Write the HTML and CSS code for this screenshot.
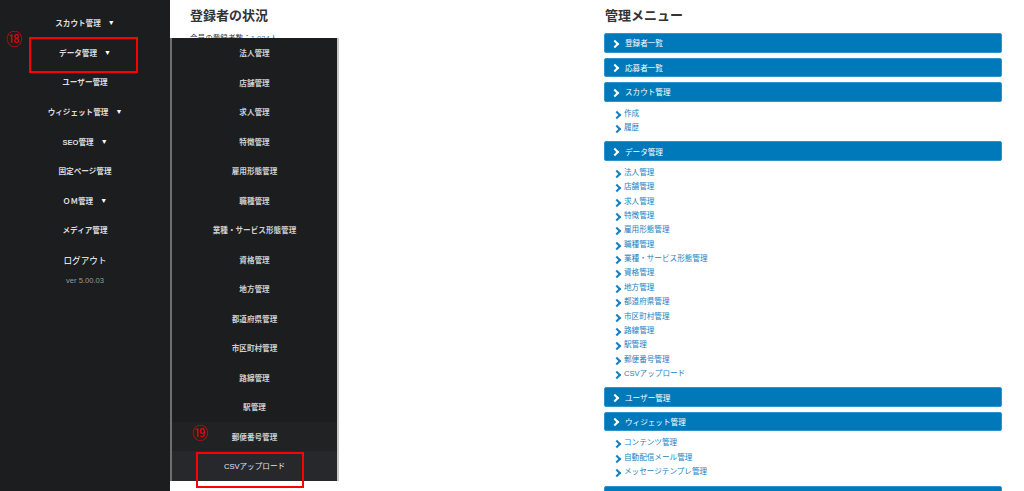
FILE: index.html
```html
<!DOCTYPE html>
<html lang="ja">
<head>
<meta charset="UTF-8">
<title>管理画面</title>
<link rel="stylesheet" href="styles.css">
</head>
<body>
<div class="wrap">
  <aside class="side">
    <ul class="side-nav">
      <li>スカウト管理<span class="tri">▼</span></li>
      <li>データ管理<span class="tri">▼</span></li>
      <li>ユーザー管理</li>
      <li>ウィジェット管理<span class="tri">▼</span></li>
      <li>SEO管理<span class="tri">▼</span></li>
      <li>固定ページ管理</li>
      <li>ＯＭ管理<span class="tri">▼</span></li>
      <li>メディア管理</li>
      <li class="logout">ログアウト</li>
    </ul>
    <p class="ver">ver 5.00.03</p>

    <ul class="sub-menu">
      <li>法人管理</li>
      <li>店舗管理</li>
      <li>求人管理</li>
      <li>特徴管理</li>
      <li>雇用形態管理</li>
      <li>職種管理</li>
      <li>業種・サービス形態管理</li>
      <li>資格管理</li>
      <li>地方管理</li>
      <li>都道府県管理</li>
      <li>市区町村管理</li>
      <li>路線管理</li>
      <li>駅管理</li>
      <li class="hover1">郵便番号管理</li>
      <li class="hover2">CSVアップロード</li>
    </ul>

    <span class="note note18">⑱</span>
    <span class="mark mark18"></span>
    <span class="note note19">⑲</span>
    <span class="mark mark19"></span>
  </aside>

  <main class="main">
    <section class="status">
      <h2>登録者の状況</h2>
      <p class="count">会員の登録者数：<a href="#">1,024人</a></p>
    </section>

    <section class="menu">
      <h2>管理メニュー</h2>
      <div class="bar">登録者一覧</div>
      <div class="bar">応募者一覧</div>
      <div class="bar">スカウト管理</div>
      <ul class="links">
        <li>作成</li>
        <li>履歴</li>
      </ul>
      <div class="bar">データ管理</div>
      <ul class="links">
        <li>法人管理</li>
        <li>店舗管理</li>
        <li>求人管理</li>
        <li>特徴管理</li>
        <li>雇用形態管理</li>
        <li>職種管理</li>
        <li>業種・サービス形態管理</li>
        <li>資格管理</li>
        <li>地方管理</li>
        <li>都道府県管理</li>
        <li>市区町村管理</li>
        <li>路線管理</li>
        <li>駅管理</li>
        <li>郵便番号管理</li>
        <li>CSVアップロード</li>
      </ul>
      <div class="bar">ユーザー管理</div>
      <div class="bar">ウィジェット管理</div>
      <ul class="links">
        <li>コンテンツ管理</li>
        <li>自動配信メール管理</li>
        <li>メッセージテンプレ管理</li>
      </ul>
      <div class="bar bar-last"></div>
    </section>
  </main>
</div>
</body>
</html>
```

FILE: styles.css
```css
*{
    padding:0;
    margin:0;
    box-sizing:border-box;
}
ul,li{
    list-style:none;
}
body{
    font-family:"Liberation Sans","Noto Sans CJK JP",sans-serif;
    background:#fff;
    color:#333;
    overflow:hidden;
}
.wrap{
    display:flex;
    height:491px;
}

/* sidebar */
.side{
    width:170px;
    flex-shrink:0;
    background:#1c1d1f;
    padding-top:8px;
    position:relative;
}
.side-nav li{
    height:29.6px;
    display:flex;
    align-items:center;
    justify-content:center;
    font-size:7.6px;
    font-weight:bold;
    color:#dcdcdc;
}
.side-nav .tri{
    font-size:7px;
    margin-left:7px;
    color:#fff;
}
.side-nav .logout{
    font-size:8.6px;
    font-weight:normal;
    color:#fff;
}
.ver{
    text-align:center;
    font-size:7.6px;
    color:#9a9a9a;
    margin-top:2px;
}

/* flyout of data menu */
.sub-menu{
    position:absolute;
    top:38px;
    left:170px;
    width:169px;
    height:443px;
    background:#1c1d1f;
    border-left:2px solid #6e6f71;
    border-right:2px solid #c9c9c9;
    z-index:5;
}
.sub-menu li{
    height:29.53px;
    display:flex;
    align-items:center;
    justify-content:center;
    font-size:7.6px;
    font-weight:bold;
    color:#cfcfcf;
}
.sub-menu .hover1{
    background:#202224;
}
.sub-menu .hover2{
    background:#26282b;
    font-weight:normal;
    color:#e6e6e6;
}

/* red annotations */
.note{
    position:absolute;
    color:#e00;
    font-size:16px;
    line-height:16px;
    z-index:10;
}
.note18{
    left:6px;
    top:32px;
}
.note19{
    left:192px;
    top:426px;
}
.mark{
    position:absolute;
    border:2px solid #f00;
    z-index:10;
}
.mark18{
    left:29px;
    top:37px;
    width:109px;
    height:36px;
}
.mark19{
    left:196px;
    top:452px;
    width:108px;
    height:36px;
}

/* main */
.main{
    flex:1;
    display:grid;
    grid-template-columns:1fr 1fr;
    column-gap:16px;
    padding:7px 22px 0 20px;
    align-items:start;
}
h2{
    font-size:13px;
    line-height:18px;
    font-weight:bold;
    color:#333;
}
.count{
    margin-top:9px;
    font-size:7.6px;
    line-height:10px;
}
.count a{
    color:#1a7fc1;
    text-decoration:none;
}

.menu h2{
    margin-left:1px;
    margin-bottom:8px;
}
.bar{
    height:19.5px;
    margin-bottom:5px;
    background:#0079bb;
    border:1px solid #2f93cc;
    border-radius:2px;
    color:#fff;
    font-size:7.6px;
    display:flex;
    align-items:center;
    padding-left:20px;
    position:relative;
}
.bar:before,
.links li:before{
    content:"";
    position:absolute;
    width:4px;
    height:4px;
    border-top:2px solid #fff;
    border-right:2px solid #fff;
    transform:rotate(45deg);
}
.bar:before{
    left:7px;
    top:6.5px;
}
.bar-last:before{
    display:none;
}
.links{
    padding-bottom:6px;
}
.links li{
    position:relative;
    height:14.38px;
    line-height:14.38px;
    padding-left:20px;
    font-size:7.6px;
    color:#1a7fc1;
}
.links li:before{
    left:9.5px;
    top:5px;
    border-color:#1a7fc1;
}
```
